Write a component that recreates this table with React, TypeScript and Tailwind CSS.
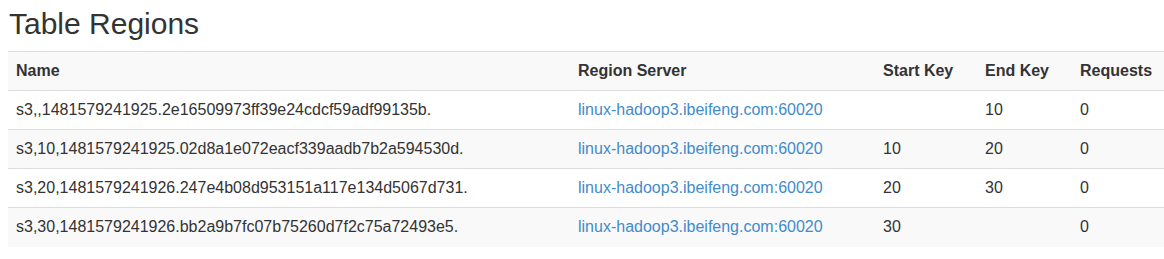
const regions = [
  {
    name: "s3,,1481579241925.2e16509973ff39e24cdcf59adf99135b.",
    server: "linux-hadoop3.ibeifeng.com:60020",
    startKey: "",
    endKey: "10",
    requests: "0",
  },
  {
    name: "s3,10,1481579241925.02d8a1e072eacf339aadb7b2a594530d.",
    server: "linux-hadoop3.ibeifeng.com:60020",
    startKey: "10",
    endKey: "20",
    requests: "0",
  },
  {
    name: "s3,20,1481579241926.247e4b08d953151a117e134d5067d731.",
    server: "linux-hadoop3.ibeifeng.com:60020",
    startKey: "20",
    endKey: "30",
    requests: "0",
  },
  {
    name: "s3,30,1481579241926.bb2a9b7fc07b75260d7f2c75a72493e5.",
    server: "linux-hadoop3.ibeifeng.com:60020",
    startKey: "30",
    endKey: "",
    requests: "0",
  },
];

const App = () => {
  return (
    <div className="bg-white pl-[8px] text-[16px] text-[#333] font-['Liberation_Sans',Arial,sans-serif]">
      {/* Section title */}
      <h2 className="pt-[7px] pl-[1px] h-[51px] text-[30px] leading-[33px] font-normal text-[#333]">
        Table Regions
      </h2>

      {/* Striped regions table */}
      <table className="w-[1156px] table-fixed border-collapse">
        <colgroup>
          <col className="w-[562px]" />
          <col className="w-[305px]" />
          <col className="w-[102px]" />
          <col className="w-[95px]" />
          <col className="w-[92px]" />
        </colgroup>
        <tbody>
          <tr className="h-[39px] border-t border-[#ddd] bg-[#f9f9f9] font-bold">
            <th className="px-[8px] text-left align-middle">Name</th>
            <th className="px-[8px] text-left align-middle">Region Server</th>
            <th className="px-[8px] text-left align-middle">Start Key</th>
            <th className="px-[8px] text-left align-middle">End Key</th>
            <th className="px-[8px] text-left align-middle">Requests</th>
          </tr>
          {regions.map((r, i) => (
            <tr
              key={r.name}
              className={`h-[39px] border-t border-[#ddd] ${i % 2 === 1 ? "bg-[#f9f9f9]" : "bg-white"}`}
            >
              <td className="px-[8px] align-middle whitespace-nowrap">{r.name}</td>
              <td className="px-[8px] align-middle whitespace-nowrap">
                <a href="#" className="text-[#428bca]">
                  {r.server}
                </a>
              </td>
              <td className="px-[8px] align-middle">{r.startKey}</td>
              <td className="px-[8px] align-middle">{r.endKey}</td>
              <td className="px-[8px] align-middle">{r.requests}</td>
            </tr>
          ))}
        </tbody>
      </table>
      <div className="h-[13px]" />
    </div>
  );
};

export default App;
